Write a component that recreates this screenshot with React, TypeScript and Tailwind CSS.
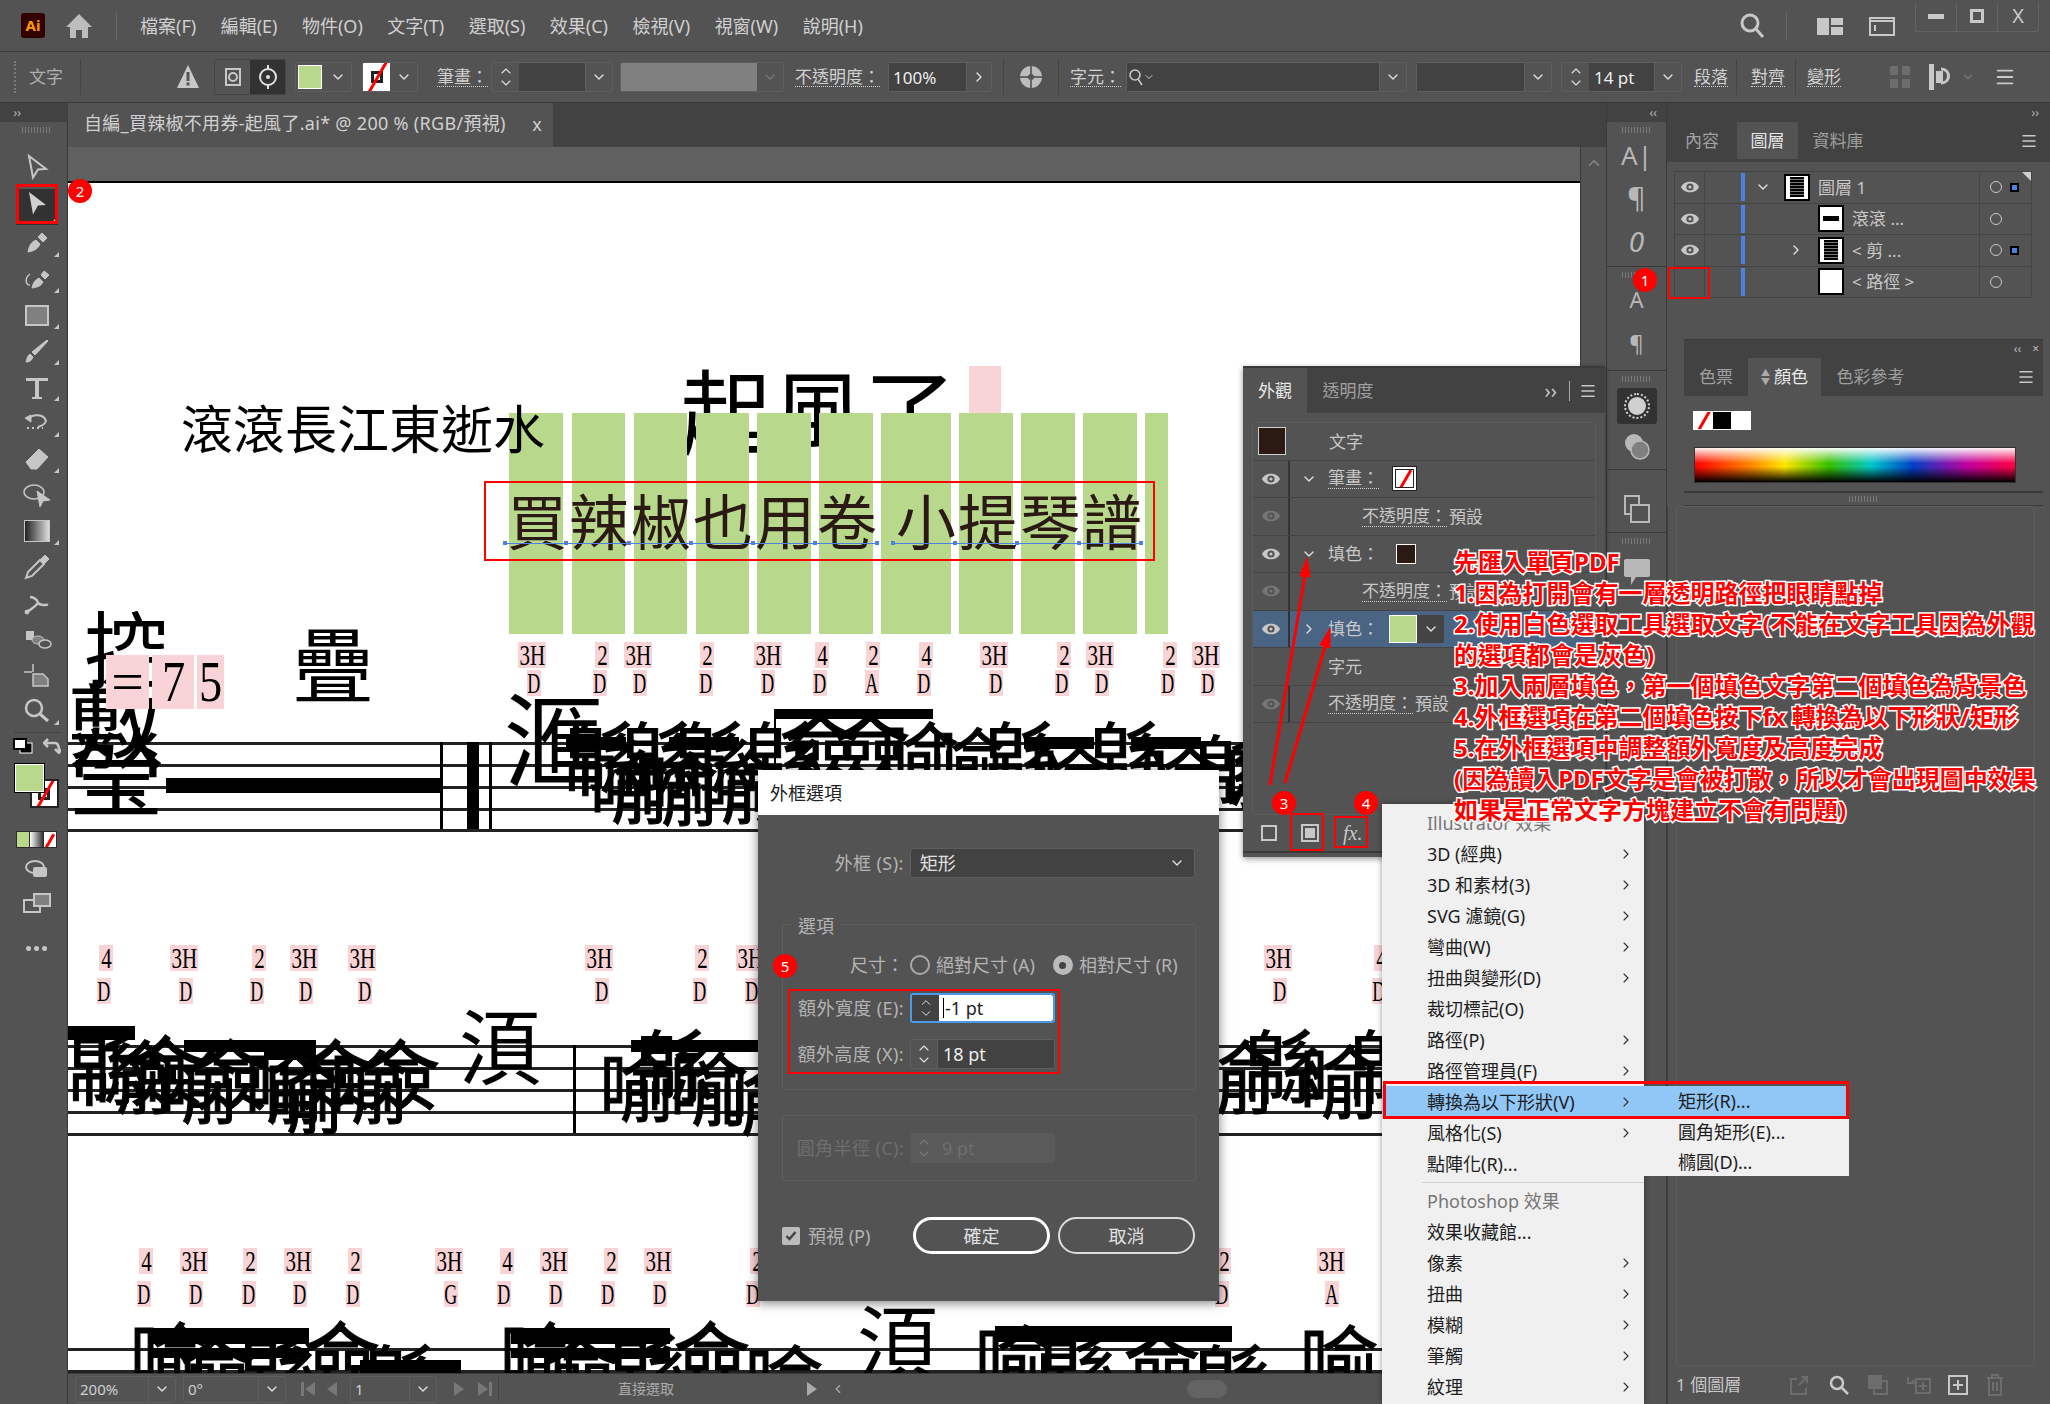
import { ChevronDown, ChevronRight, ChevronUp, Menu as MenuIcon } from 'lucide-react'
import type { ReactNode } from 'react'

const ORIGIN_X = 69
const ORIGIN_Y = 183

// chord labels on the score: [top text, x, bottom text, x]
type Chord = [string, number, string, number]

const chordRows: { top: number; bottom: number; items: Chord[] }[] = [
  {
    top: 642,
    bottom: 670,
    items: [
      ['3H', 519, 'D', 528], ['2', 596, 'D', 594], ['3H', 625, 'D', 634], ['2', 701, 'D', 700],
      ['3H', 755, 'D', 762], ['4', 816, 'D', 814], ['2', 867, 'A', 866], ['4', 920, 'D', 918],
      ['3H', 981, 'D', 990], ['2', 1058, 'D', 1056], ['3H', 1087, 'D', 1096], ['2', 1164, 'D', 1162],
      ['3H', 1193, 'D', 1202],
    ],
  },
  {
    top: 945,
    bottom: 978,
    items: [
      ['4', 100, 'D', 98], ['3H', 171, 'D', 180], ['2', 253, 'D', 251], ['3H', 291, 'D', 300],
      ['3H', 349, 'D', 359], ['3H', 586, 'D', 596], ['2', 696, 'D', 694], ['3H', 737, 'D', 746],
      ['3H', 1265, 'D', 1274], ['4', 1375, 'D', 1373],
    ],
  },
  {
    top: 1248,
    bottom: 1281,
    items: [
      ['4', 140, 'D', 138], ['3H', 181, 'D', 190], ['2', 244, 'D', 243], ['3H', 285, 'D', 294],
      ['2', 349, 'D', 347], ['3H', 436, 'G', 445], ['4', 501, 'D', 498], ['3H', 541, 'D', 550],
      ['2', 605, 'D', 602], ['3H', 645, 'D', 654], ['2', 751, 'D', 747], ['2', 1218, 'D', 1216],
      ['3H', 1318, 'A', 1326],
    ],
  },
]

// overlapping glyphs from the broken PDF import: [x, y, glyph, size]
const garbled: [number, number, string, number][] = [
  [565, 722, '緜', 80], [590, 750, '喻', 80], [622, 722, '緜', 80], [640, 752, '喻', 80], [675, 722, '緜', 80],
  [700, 750, '喻', 80], [745, 722, '緜', 80], [785, 712, '僉', 76], [835, 712, '僉', 76], [880, 722, '喻', 80],
  [930, 728, '喻', 76], [985, 722, '緜', 80], [1030, 745, '喻', 80], [1090, 722, '緜', 80], [1140, 745, '喻', 80],
  [1195, 735, '緜', 80], [1225, 745, '喻', 76],
  [69, 1032, '緜', 80], [95, 1040, '喻', 80], [130, 1036, '僉', 76], [160, 1050, '喻', 80], [195, 1040, '僉', 76],
  [245, 1050, '喻', 80], [265, 1060, '喻', 80], [300, 1040, '僉', 76], [330, 1050, '喻', 80], [365, 1040, '僉', 76],
  [600, 1052, '喻', 76], [636, 1030, '緜', 80], [670, 1052, '喻', 80], [720, 1062, '喻', 80],
  [1195, 1040, '喻', 80], [1245, 1030, '緜', 80], [1300, 1045, '喻', 80], [1350, 1030, '緜', 80],
  [130, 1322, '喻', 80], [180, 1335, '僉', 76], [240, 1335, '緜', 80], [305, 1322, '僉', 76], [365, 1345, '緜', 80],
  [500, 1322, '喻', 80], [545, 1335, '僉', 76], [610, 1335, '緜', 80], [675, 1322, '僉', 76], [745, 1345, '喻', 80],
  [975, 1325, '喻', 80], [1040, 1335, '緜', 80], [1125, 1330, '僉', 76], [1195, 1345, '緜', 80], [1300, 1325, '喻', 80],
]

const bigGlyphs: [number, number, string, number][] = [
  [85, 612, '控', 84], [69, 680, '敷', 96], [69, 728, '瑩', 96], [293, 628, '疊', 82],
  [505, 695, '滙', 100], [460, 1010, '湏', 82], [858, 1306, '湏', 82],
]

const beams: [number, number, number, number][] = [
  [167, 778, 275, 15], [468, 742, 12, 87], [490, 742, 3, 87], [441, 742, 3, 87],
  [567, 737, 60, 13], [670, 737, 70, 13], [775, 709, 159, 10], [775, 709, 2, 100], [1025, 737, 70, 12], [1132, 737, 70, 12],
  [69, 1026, 67, 14], [185, 1040, 132, 12], [265, 1052, 52, 8], [632, 1040, 128, 12], [574, 1045, 3, 88],
  [151, 1328, 159, 16], [151, 1348, 159, 10], [512, 1328, 159, 16], [512, 1348, 159, 10], [361, 1360, 101, 13],
  [996, 1326, 237, 16],
]

const staffLines = [742, 764, 786, 808, 829, 1045, 1067, 1089, 1111, 1133, 1348, 1370]
const greenBars: [number, number][] = [
  [510, 54], [573, 53], [635, 53], [697, 53], [758, 54], [820, 54], [882, 70], [960, 54], [1022, 54], [1084, 54], [1146, 23],
]
const baselineNodes = [506, 567, 630, 692, 754, 816, 878, 894, 956, 1018, 1080, 1142]

const menuRows: [string, boolean, boolean?][] = [
  ['3D (經典)', true], ['3D 和素材(3)', true], ['SVG 濾鏡(G)', true], ['彎曲(W)', true], ['扭曲與變形(D)', true],
  ['裁切標記(O)', false], ['路徑(P)', true], ['路徑管理員(F)', true], ['轉換為以下形狀(V)', true, true],
  ['風格化(S)', true], ['點陣化(R)...', false],
]
const photoshopRows: [string, boolean][] = [
  ['效果收藏館...', false], ['像素', true], ['扭曲', true], ['模糊', true], ['筆觸', true], ['紋理', true],
]

function Tool({ children, corner = true }: { children: ReactNode; corner?: boolean }) {
  return (
    <div className="relative flex h-9 w-full items-center justify-center">
      <svg width="30" height="30" viewBox="0 0 30 30" className="fill-[#c6c6c6] stroke-[#c6c6c6]">
        {children}
      </svg>
      {corner && <span className="absolute bottom-[4px] right-[8px] h-0 w-0 border-b-[5px] border-l-[5px] border-b-[#c6c6c6] border-l-transparent" />}
    </div>
  )
}

function Eye({ dim = false }: { dim?: boolean }) {
  return (
    <svg width="20" height="14" viewBox="0 0 20 14" className={dim ? 'opacity-30' : ''}>
      <path d="M1 7c3-7 15-7 18 0-3 7-15 7-18 0z" fill="#c8c8c8" />
      <circle cx="10" cy="7" r="3.6" fill="#535353" />
      <circle cx="10" cy="7" r="1.6" fill="#c8c8c8" />
    </svg>
  )
}

function Stepper({ className = '' }: { className?: string }) {
  return (
    <div className={`flex w-[27px] shrink-0 flex-col items-center justify-center text-[#e0e0e0] ${className}`}>
      <ChevronUp size={16} strokeWidth={1.6} className="-mb-[2px]" />
      <ChevronDown size={16} strokeWidth={1.6} className="-mt-[2px]" />
    </div>
  )
}

function Chevron({ className = '' }: { className?: string }) {
  return (
    <div className={`flex w-[27px] shrink-0 items-center justify-center border-l border-[#5e5e5e] text-[#e0e0e0] ${className}`}>
      <ChevronDown size={16} strokeWidth={2} />
    </div>
  )
}

function NoneSwatch({ className = '', inner = false }: { className?: string; inner?: boolean }) {
  return (
    <div className={`overflow-hidden bg-white ${className}`}>
      <div className="relative flex h-full w-full items-center justify-center">
        {inner && <span className="h-[12px] w-[12px] border-[3px] border-[#222]" />}
        <span className="absolute left-[-20%] top-1/2 h-[3px] w-[140%] -rotate-[60deg] bg-[#f00]" />
      </div>
    </div>
  )
}

function Badge({ n, x, y }: { n: number; x: string; y: string }) {
  return (
    <div className={`absolute z-40 flex h-[24px] w-[24px] items-center justify-center rounded-full bg-[#f00] text-[15px] leading-none text-white ${x} ${y}`}>
      {n}
    </div>
  )
}

function LayerRow({ thumb, label, chevron, indent, gap, eye, dot }: {
  thumb: ReactNode
  label: string
  chevron?: 'down' | 'right'
  indent: string
  gap?: string
  eye: boolean
  dot: boolean
}) {
  return (
    <div className="flex h-[31.5px] items-center border-b border-[#444] text-[17px] text-[#c8c8c8]">
      <div className="flex h-full w-[30px] items-center justify-center border-r border-[#444]">{eye && <Eye />}</div>
      <div className="h-full w-[36px]" />
      <span className="h-[28px] w-[4px] bg-[#4f7fe0]" />
      <div className={`flex h-full flex-1 items-center ${indent}`}>
        {chevron === 'down' && <ChevronDown size={16} className={`text-[#e0e0e0] ${gap}`} />}
        {chevron === 'right' && <ChevronRight size={16} className={`text-[#e0e0e0] ${gap}`} />}
        <div className="mr-[8px] flex h-[27px] w-[26px] items-center justify-center border-2 border-black bg-white">
          {thumb}
        </div>
        {label}
      </div>
      <div className="flex h-full w-[52px] items-center border-l border-[#444] pl-[10px]">
        <span className="h-[12px] w-[12px] rounded-full border border-[#c8c8c8]" />
        {dot && <span className="ml-[8px] h-[9px] w-[9px] border-2 border-black bg-[#4f7fe0]" />}
      </div>
    </div>
  )
}

function AppearanceRow({ eye, eyeDim, chevron, children, highlight }: {
  eye?: boolean
  eyeDim?: boolean
  chevron?: 'down' | 'right'
  children: ReactNode
  highlight?: boolean
}) {
  return (
    <div className={`flex h-[37.5px] items-center border-b border-[#444] text-[17px] text-[#c8c8c8] ${highlight ? 'bg-[#4a6484]' : ''}`}>
      <div className={`flex h-full w-[37px] items-center justify-center ${eye || eyeDim ? 'border-r-2 border-[#333]' : ''}`}>
        {eye && <Eye />}
        {eyeDim && <Eye dim />}
      </div>
      <div className="flex w-[38px] items-center justify-center text-[#e0e0e0]">
        {chevron === 'down' && <ChevronDown size={16} />}
        {chevron === 'right' && <ChevronRight size={16} />}
      </div>
      {children}
    </div>
  )
}

function DottedLabel({ children, className = '' }: { children: ReactNode; className?: string }) {
  return <span className={`border-b border-dotted border-[#d0d0d0] leading-[1.15] ${className}`}>{children}</span>
}

function ScoreThumb() {
  return <span className="block h-[20px] w-[14px] bg-[repeating-linear-gradient(0deg,#000_0_2px,#777_2px_3px)]" />
}

function Grip({ className = '' }: { className?: string }) {
  return <div className={`h-[6px] w-[30px] bg-[repeating-linear-gradient(90deg,#7a7a7a_0_1px,transparent_1px_3px)] ${className}`} />
}

export default function App() {
  return (
    <div className="relative h-[1404px] w-[2050px] overflow-hidden bg-[#535353] font-['Noto_Sans','Noto_Sans_CJK_TC',sans-serif] text-[18px] text-[#d0d0d0]">
      {/* title bar */}
      <header className="flex h-[52px] items-center border-b border-[#3e3e3e] bg-[#535353]">
        <div className="ml-[21px] flex h-[25px] w-[24px] items-center justify-center rounded-[3px] bg-[#330000] text-[15px] font-bold leading-none text-[#ff9a00]">Ai</div>
        <svg width="28" height="26" viewBox="0 0 28 26" className="ml-[20px] fill-[#bdbdbd]">
          <path d="M14 1L1 14h4v11h6v-8h6v8h6V14h4z" />
        </svg>
        <span className="ml-[23px] mr-[23px] h-[30px] w-px bg-[#666]" />
        <nav className="flex gap-[24.5px] text-[18px] leading-none">
          {['檔案(F)', '編輯(E)', '物件(O)', '文字(T)', '選取(S)', '效果(C)', '檢視(V)', '視窗(W)', '說明(H)'].map(m => (
            <span key={m}>{m}</span>
          ))}
        </nav>
        <div className="ml-auto flex items-center">
          <svg width="28" height="28" viewBox="0 0 28 28" fill="none" stroke="#c8c8c8" strokeWidth="3" className="mr-[20px]">
            <circle cx="12" cy="11" r="8" />
            <path d="M18 17l7 8" />
          </svg>
          <span className="h-[30px] w-px bg-[#666]" />
          <svg width="26" height="20" viewBox="0 0 26 20" className="ml-[30px] fill-[#c8c8c8]">
            <rect x="0" y="2" width="12" height="17" />
            <rect x="14" y="2" width="12" height="7" />
            <rect x="14" y="11" width="12" height="8" />
          </svg>
          <svg width="26" height="20" viewBox="0 0 26 20" fill="none" stroke="#c8c8c8" strokeWidth="2" className="ml-[26px]">
            <rect x="1" y="2" width="24" height="17" />
            <path d="M1 5h24M6 9v6" />
          </svg>
          <div className="ml-[20px] mb-[18px] flex h-[30px] w-[124px] items-center rounded-b-[3px] border border-t-0 border-[#636363] text-[#c8c8c8]">
            <div className="flex h-full flex-1 items-center justify-center border-r border-[#636363]"><span className="h-[5px] w-[16px] bg-[#c8c8c8]" /></div>
            <div className="flex h-full flex-1 items-center justify-center border-r border-[#636363]"><span className="h-[14px] w-[14px] border-[3px] border-[#c8c8c8]" /></div>
            <div className="flex h-full flex-1 items-center justify-center text-[20px] leading-none">X</div>
          </div>
          <span className="w-[11px]" />
        </div>
      </header>

      {/* control bar */}
      <div className="flex h-[51px] items-center border-b border-[#3a3a3a] bg-[#535353] text-[17px]">
        <span className="ml-[14px] h-[32px] w-[2px] border-l-2 border-dotted border-[#7a7a7a]" />
        <span className="ml-[13px] w-[51px] text-[#b0b0b0]">文字</span>
        <span className="h-[36px] w-px bg-[#444]" />
        <svg width="24" height="26" viewBox="0 0 24 26" className="ml-[95px] fill-[#c8c8c8]">
          <path d="M12 1L1 24h22z" />
          <rect x="10.5" y="8" width="3" height="9" fill="#535353" />
          <rect x="10.5" y="18.5" width="3" height="3" fill="#535353" />
        </svg>
        <div className="ml-[14px] flex h-[36px] w-[72px] rounded-[3px] border border-[#444]">
          <div className="flex flex-1 items-center justify-center">
            <svg width="20" height="22" viewBox="0 0 20 22" fill="none" stroke="#c8c8c8" strokeWidth="2"><rect x="3" y="3" width="14" height="16" /><circle cx="10" cy="11" r="4" /></svg>
          </div>
          <div className="flex flex-1 items-center justify-center bg-[#323232]">
            <svg width="22" height="24" viewBox="0 0 22 24" fill="none" stroke="#e0e0e0" strokeWidth="2"><circle cx="11" cy="12" r="8" /><path d="M11 0v4M11 20v4" /><circle cx="11" cy="12" r="1" /></svg>
          </div>
        </div>
        <div className="ml-[9px] flex h-[30px] w-[57px] rounded-[3px] border border-[#5e5e5e]">
          <span className="m-[2px] w-[27px] border border-white bg-[#b8d88c]" />
          <Chevron className="border-none" />
        </div>
        <div className="ml-[10px] flex h-[30px] w-[56px] rounded-[3px] border border-[#5e5e5e]">
          <NoneSwatch inner className="w-[28px]" />
          <Chevron className="border-none" />
        </div>
        <DottedLabel className="ml-[19px]">筆畫：</DottedLabel>
        <div className="ml-[3px] flex h-[30px] w-[122px] rounded-[3px] border border-[#5e5e5e]">
          <Stepper />
          <span className="flex-1 bg-[#424242]" />
          <Chevron />
        </div>
        <div className="ml-[7px] flex h-[30px] w-[164px] rounded-[3px] border border-[#5e5e5e]">
          <span className="w-[136px] bg-[#808080]" />
          <div className="flex flex-1 items-center justify-center text-[#7a7a7a]"><ChevronDown size={16} /></div>
        </div>
        <DottedLabel className="ml-[11px]">不透明度：</DottedLabel>
        <div className="ml-[8px] flex h-[30px] w-[104px] rounded-[3px] border border-[#5e5e5e]">
          <span className="flex w-[77px] items-center bg-[#424242] pl-[4px] leading-none text-[#eee]">100%</span>
          <div className="flex flex-1 items-center justify-center border-l border-[#5e5e5e] text-[#e0e0e0]"><ChevronRight size={16} /></div>
        </div>
        <span className="ml-[11px] h-[36px] w-px bg-[#444]" />
        <svg width="24" height="24" viewBox="0 0 24 24" className="ml-[15px]">
          <circle cx="12" cy="12" r="11" fill="#bdbdbd" />
          <circle cx="12" cy="12" r="3" fill="#535353" />
          <path d="M12 1v8M1 12h8M15 12h8M12 15v8" stroke="#666" strokeWidth="2" />
        </svg>
        <span className="ml-[15px] h-[36px] w-px bg-[#444]" />
        <DottedLabel className="ml-[11px]">字元：</DottedLabel>
        <div className="ml-[5px] flex h-[30px] w-[281px] rounded-[3px] border border-[#5e5e5e]">
          <div className="flex flex-1 items-center bg-[#424242] pl-[2px]">
            <svg width="14" height="18" viewBox="0 0 14 18" fill="none" stroke="#c8c8c8" strokeWidth="1.6"><circle cx="6" cy="7" r="5" /><path d="M9 11l4 6" /></svg>
            <ChevronDown size={12} className="text-[#c8c8c8]" />
          </div>
          <Chevron />
        </div>
        <div className="ml-[9px] flex h-[30px] w-[136px] rounded-[3px] border border-[#5e5e5e]">
          <span className="flex-1 bg-[#424242]" />
          <Chevron />
        </div>
        <div className="ml-[9px] flex h-[30px] w-[121px] rounded-[3px] border border-[#5e5e5e]">
          <Stepper />
          <span className="flex flex-1 items-center bg-[#424242] pl-[5px] leading-none text-[#eee]">14 pt</span>
          <Chevron />
        </div>
        <DottedLabel className="ml-[12px]">段落</DottedLabel>
        <span className="ml-[8px] h-[36px] w-px bg-[#444]" />
        <DottedLabel className="ml-[14px]">對齊</DottedLabel>
        <span className="ml-[10px] h-[36px] w-px bg-[#444]" />
        <DottedLabel className="ml-[11px]">變形</DottedLabel>
        <svg width="20" height="24" viewBox="0 0 20 24" className="ml-[49px] fill-[#6d6d6d]">
          <rect x="0" y="1" width="8" height="9" /><rect x="12" y="1" width="8" height="9" /><rect x="0" y="14" width="8" height="9" /><rect x="12" y="14" width="8" height="9" />
        </svg>
        <svg width="24" height="26" viewBox="0 0 24 26" className="ml-[19px]">
          <rect x="0" y="0" width="5" height="26" fill="#c8c8c8" />
          <rect x="7" y="7" width="7" height="12" fill="#c8c8c8" />
          <path d="M12 5c10 0 10 14 0 14" fill="none" stroke="#c8c8c8" strokeWidth="3" />
        </svg>
        <ChevronDown size={14} className="ml-[8px] text-[#777]" />
        <MenuIcon size={22} className="ml-[19px] text-[#c8c8c8]" />
      </div>

      {/* working area */}
      <main className="flex h-[1301px]">
        {/* tools */}
        <aside className="flex w-[68px] shrink-0 flex-col items-center border-r border-[#3a3a3a] bg-[#535353] pl-[6px]">
          <div className="-ml-[6px] flex h-[19px] w-[68px] items-center bg-[#424242] pl-[14px] text-[12px] leading-none text-[#bbb]">››</div>
          <Grip className="mt-[5px]" />
          <div className="mt-[17px] w-full">
            <Tool corner={false}><path d="M7 3l17 13-8 .5 -5 8z" fill="none" strokeWidth="2" /></Tool>
            <div className="relative mx-auto h-9 w-[42px] bg-[#323232]">
              <svg width="30" height="30" viewBox="0 0 30 30" className="mx-auto mt-[3px] fill-[#d0d0d0]"><path d="M7 3l17 13-8 .5-5 9z" /></svg>
              <span className="absolute bottom-[2px] right-[2px] h-0 w-0 border-b-[5px] border-l-[5px] border-b-[#c6c6c6] border-l-transparent" />
            </div>
            <Tool><path d="M6 24c1-6 3-10 8-12l4 4c-2 5-6 7-12 8z" /><path d="M16 9l4-4 5 5-4 4z" /></Tool>
            <Tool><path d="M10 24c1-5 3-8 7-10l4 4c-2 4-5 5-11 6z" /><path d="M19 11l3-4 5 4-4 4z" /><path d="M8 10c-6 4-4 12 0 11" fill="none" strokeWidth="1.5" /></Tool>
            <Tool><rect x="4" y="6" width="22" height="19" fill="#808080" strokeWidth="2" /></Tool>
            <Tool><path d="M4 26c4 0 6-2 7-5l-3-3c-2 1-3 4-4 8z" /><path d="M10 16L25 4l1 1-13 14z" /></Tool>
            <Tool><path d="M4 6h22v3h-9v16h3v2H10v-2h3V9H4z" strokeWidth="0" /></Tool>
            <Tool><path d="M6 12c4-7 16-6 18 1-2 5-6 5-8 6" fill="none" strokeWidth="2" /><path d="M3 10l6-3v7z" /><path d="M5 20h16" strokeDasharray="2 3" fill="none" strokeWidth="2" /></Tool>
            <Tool><path d="M4 18L17 5l9 8-11 12H9z" /></Tool>
            <Tool corner={false}><ellipse cx="12" cy="12" rx="10" ry="7" fill="none" strokeWidth="1.5" /><path d="M15 11l13 9-7 1-3 6z" /></Tool>
            <div className="relative flex h-9 items-center justify-center">
              <span className="h-[22px] w-[26px] border border-[#c6c6c6] bg-[linear-gradient(90deg,#222,#ddd)]" />
              <span className="absolute bottom-[4px] right-[8px] h-0 w-0 border-b-[5px] border-l-[5px] border-b-[#c6c6c6] border-l-transparent" />
            </div>
            <Tool corner={false}><path d="M4 26l2-6L18 8l4 4-12 12z" fill="none" strokeWidth="2" /><path d="M18 8l5-5 4 4-5 5z" /></Tool>
            <Tool corner={false}><path d="M5 24c4-3 8-5 11-9 4 4 8 1 10 2M8 9c4 0 8 3 8 6" fill="none" strokeWidth="2.5" /><circle cx="5" cy="24" r="2" /></Tool>
            <Tool corner={false}><rect x="4" y="7" width="8" height="9" strokeWidth="0" /><ellipse cx="16" cy="16" rx="6" ry="4" fill="#808080" /><ellipse cx="23" cy="20" rx="6" ry="4" fill="#535353" strokeWidth="1.5" /></Tool>
            <Tool corner={false}><path d="M2 12h8M11 4v8" fill="none" strokeWidth="1.5" /><path d="M11 14h10l5 5v7H11z" fill="#808080" strokeWidth="1.5" /></Tool>
            <Tool><circle cx="12" cy="12" r="8" fill="none" strokeWidth="2.5" /><path d="M18 18l8 7" strokeWidth="3" /></Tool>
          </div>
          <div className="mt-[3px] h-px w-[46px] bg-[#444]" />
          <div className="mt-[3px] flex h-[20px] w-[48px] items-center justify-between">
            <svg width="20" height="16" viewBox="0 0 20 16"><rect x="7" y="5" width="12" height="10" fill="#000" stroke="#fff" /><rect x="1" y="1" width="12" height="10" fill="#fff" stroke="#000" strokeWidth="2" /></svg>
            <svg width="18" height="16" viewBox="0 0 18 16" fill="none" stroke="#c6c6c6" strokeWidth="2.5"><path d="M2 5h10c3 0 4 3 4 8M5 1L1 5l4 4M12 11l4 4 2-4" /></svg>
          </div>
          <div className="relative mt-[8px] h-[44px] w-[44px]">
            <div className="absolute bottom-0 right-0 h-[29px] w-[29px] border-2 border-[#222]">
              <NoneSwatch inner className="h-full w-full" />
            </div>
            <span className="absolute left-0 top-0 h-[28px] w-[29px] border border-white bg-[#b8d88c] outline outline-black" />
          </div>
          <div className="mt-[23px] flex h-[17px] w-[41px] gap-px bg-[#2c2c2c] p-px">
            <span className="flex-1 bg-[#b8d88c]" />
            <span className="flex-1 bg-[linear-gradient(90deg,#fff,#333)]" />
            <NoneSwatch className="flex-1" />
          </div>
          <svg width="24" height="18" viewBox="0 0 24 18" className="mt-[12px] fill-[#c6c6c6]">
            <ellipse cx="10" cy="7" rx="9" ry="6" fill="none" stroke="#c6c6c6" strokeWidth="2" /><rect x="8" y="7" width="14" height="10" rx="2" />
          </svg>
          <svg width="28" height="20" viewBox="0 0 28 20" fill="none" stroke="#c6c6c6" strokeWidth="2" className="mt-[15px]">
            <rect x="1" y="7" width="16" height="12" /><rect x="11" y="1" width="16" height="12" fill="#808080" />
          </svg>
          <div className="mt-[33px] flex gap-[3px]">
            <span className="h-[5px] w-[5px] rounded-full bg-[#c6c6c6]" />
            <span className="h-[5px] w-[5px] rounded-full bg-[#c6c6c6]" />
            <span className="h-[5px] w-[5px] rounded-full bg-[#c6c6c6]" />
          </div>
        </aside>

        {/* document */}
        <section className="flex w-[1538px] shrink-0 flex-col">
          <div className="flex h-[44px] shrink-0 bg-[#424242]">
            <div className="flex w-[485px] items-center bg-[#535353] pb-[3px] pl-[16px] text-[18px] tracking-[0.3px] text-[#d0d0d0]">
              <span className="whitespace-nowrap">自編_買辣椒不用券-起風了.ai* @ 200 % (RGB/預視)</span>
              <span className="ml-auto mr-[11px] text-[18px] leading-none">x</span>
            </div>
          </div>
          <div className="flex min-h-0 flex-1">
            <div className="flex min-w-0 flex-1 flex-col">
              <div className="h-[36px] shrink-0 border-b-2 border-black bg-[#606060]" />
              <div className="relative flex-1 overflow-hidden bg-white font-['Liberation_Serif','Noto_Sans_CJK_TC',serif] text-black">
                <span className="absolute whitespace-nowrap text-[92px] leading-none" style={{ left: 681 - ORIGIN_X, top: 370 - ORIGIN_Y }}>起風了</span>
                <span className="absolute h-[47px] w-[32px] bg-[#f9d4d6]" style={{ left: 970 - ORIGIN_X, top: 366 - ORIGIN_Y }} />
                {greenBars.map(([x, w]) => (
                  <span key={x} className="absolute h-[221px] bg-[#b8d88c]" style={{ left: x - ORIGIN_X, top: 413 - ORIGIN_Y, width: w }} />
                ))}
                <span className="absolute whitespace-nowrap text-[52px] leading-none" style={{ left: 182 - ORIGIN_X, top: 406 - ORIGIN_Y }}>滾滾長江東逝水</span>
                <span className="absolute whitespace-nowrap text-[60px] leading-none tracking-[2px] text-[#2b1a14]" style={{ left: 508 - ORIGIN_X, top: 495 - ORIGIN_Y }}>買辣椒也用卷 小提琴譜</span>
                <span className="absolute h-px w-[372px] bg-[#4f7fe0]" style={{ left: 506 - ORIGIN_X, top: 543 - ORIGIN_Y }} />
                <span className="absolute h-px w-[248px] bg-[#4f7fe0]" style={{ left: 894 - ORIGIN_X, top: 543 - ORIGIN_Y }} />
                {baselineNodes.map(x => (
                  <span key={x} className="absolute h-[4px] w-[4px] bg-[#4f7fe0]" style={{ left: x - ORIGIN_X - 2, top: 541 - ORIGIN_Y }} />
                ))}
                {staffLines.map(y => (
                  <span key={y} className="absolute left-0 right-0 h-[3px] bg-[#222]" style={{ top: y - ORIGIN_Y }} />
                ))}
                {bigGlyphs.map(([x, y, glyph, size], i) => (
                  <span key={i} className="absolute leading-none" style={{ left: x - ORIGIN_X, top: y - ORIGIN_Y, fontSize: size }}>{glyph}</span>
                ))}
                {garbled.map(([x, y, glyph, size], i) => (
                  <span key={i} className="absolute leading-none [-webkit-text-stroke:1px_#000]" style={{ left: x - ORIGIN_X, top: y - ORIGIN_Y, fontSize: size }}>{glyph}</span>
                ))}
                {beams.map(([x, y, w, h], i) => (
                  <span key={i} className="absolute bg-black" style={{ left: x - ORIGIN_X, top: y - ORIGIN_Y, width: w, height: h }} />
                ))}
                <div className="absolute flex h-[54px] gap-[3px] text-[58px] leading-[54px]" style={{ left: 107 - ORIGIN_X, top: 655 - ORIGIN_Y }}>
                  <span className="flex w-[43px] items-center justify-center bg-[#f9d4d6]">=</span>
                  <span className="flex w-[42px] items-center justify-center bg-[#f9d4d6]"><span className="scale-x-[0.8]">7</span></span>
                  <span className="flex w-[27px] items-center justify-center bg-[#f9d4d6]"><span className="scale-x-[0.8]">5</span></span>
                </div>
                {chordRows.map(row =>
                  row.items.map(([t, tx, b, bx]) => (
                    <div key={`${row.top}-${tx}`}>
                      <span className="absolute flex h-[26px] items-center justify-center overflow-hidden bg-[#f9d4d6] text-[30px] leading-none" style={{ left: tx - ORIGIN_X, top: row.top - ORIGIN_Y, width: t.length > 1 ? 28 : 14 }}>
                        <span className="scale-x-[0.7]">{t}</span>
                      </span>
                      <span className="absolute flex h-[26px] w-[14px] items-center justify-center overflow-hidden bg-[#f9d4d6] text-[30px] leading-none" style={{ left: bx - ORIGIN_X, top: row.bottom - ORIGIN_Y }}>
                        <span className="scale-x-[0.6]">{b}</span>
                      </span>
                    </div>
                  )),
                )}
                <span className="absolute border-[2px] border-[#f00]" style={{ left: 485 - ORIGIN_X, top: 481 - ORIGIN_Y, width: 671, height: 80 }} />
              </div>
            </div>
            <div className="flex w-[26px] shrink-0 justify-center border-l border-[#3a3a3a] bg-[#535353] pt-[7px] text-[#888]">
              <ChevronUp size={18} />
            </div>
          </div>
          {/* status */}
          <div className="flex h-[31px] shrink-0 items-center border-t border-[#3a3a3a] bg-[#535353] pl-[7px] text-[15px] leading-none">
            <div className="flex h-[27px] w-[101px] rounded-[3px] border border-[#5e5e5e]">
              <span className="flex flex-1 items-center pl-[4px]">200%</span>
              <Chevron />
            </div>
            <div className="ml-[7px] flex h-[27px] w-[103px] rounded-[3px] border border-[#5e5e5e]">
              <span className="flex flex-1 items-center pl-[4px]">0°</span>
              <Chevron />
            </div>
            <svg width="42" height="16" viewBox="0 0 42 16" className="ml-[13px] fill-[#777]">
              <rect x="2" y="1" width="3" height="14" /><path d="M16 1L6 8l10 7zM38 1L28 8l10 7z" />
            </svg>
            <div className="ml-[9px] flex h-[27px] w-[87px] rounded-[3px] border border-[#5e5e5e]">
              <span className="flex flex-1 items-center pl-[4px]">1</span>
              <Chevron />
            </div>
            <svg width="48" height="16" viewBox="0 0 48 16" className="ml-[13px] fill-[#777]">
              <path d="M4 1l10 7-10 7zM28 1l10 7-10 7z" /><rect x="39" y="1" width="3" height="14" />
            </svg>
            <span className="h-[26px] w-px bg-[#444]" />
            <span className="ml-[119px] text-[14px] text-[#aaa]">直接選取</span>
            <svg width="10" height="14" viewBox="0 0 10 14" className="ml-[133px] fill-[#aaa]"><path d="M0 0l10 7-10 7z" /></svg>
            <ChevronRight size={14} className="ml-[14px] rotate-180 text-[#aaa]" />
            <span className="ml-[342px] h-[18px] w-[40px] rounded-full bg-[#636363]" />
          </div>
        </section>

        {/* icon dock */}
        <aside className="flex w-[61px] shrink-0 flex-col items-center border-x border-[#3a3a3a] bg-[#535353] text-[#b8b8b8]">
          <div className="flex h-[19px] w-full items-center justify-end bg-[#424242] pr-[9px] text-[12px] leading-none">‹‹</div>
          <Grip className="mt-[5px]" />
          <div className="mt-[2px] text-[26px] leading-[40px]">A|</div>
          <div className="text-[28px] leading-[44px]">¶</div>
          <div className="text-[28px] italic leading-[44px]">0</div>
          <div className="mt-[3px] h-px w-full bg-[#3a3a3a]" />
          <Grip className="mt-[5px]" />
          <div className="mt-0 text-[22px] leading-[42px]">A</div>
          <div className="text-[22px] leading-[44px]">¶</div>
          <div className="mt-[6px] h-px w-full bg-[#3a3a3a]" />
          <Grip className="mt-[5px]" />
          <div className="mt-[6px] flex h-[36px] w-[40px] items-center justify-center rounded-[3px] bg-[#323232]">
            <span className="h-[18px] w-[18px] rounded-full bg-[#d0d0d0] outline-2 outline-offset-2 outline-dotted outline-[#d0d0d0]" />
          </div>
          <svg width="26" height="28" viewBox="0 0 26 28" className="mt-[8px]">
            <circle cx="10" cy="11" r="9" fill="#b8b8b8" />
            <circle cx="16" cy="18" r="9" fill="#808080" stroke="#b8b8b8" strokeWidth="1.5" />
          </svg>
          <div className="mt-[9px] h-px w-full bg-[#3a3a3a]" />
          <svg width="26" height="28" viewBox="0 0 26 28" fill="none" stroke="#b8b8b8" strokeWidth="2" className="mt-[25px]">
            <rect x="1" y="1" width="14" height="18" />
            <rect x="7" y="10" width="18" height="17" fill="#535353" />
          </svg>
          <div className="mt-[9px] h-px w-full bg-[#3a3a3a]" />
          <Grip className="mt-[5px]" />
          <svg width="26" height="26" viewBox="0 0 26 26" className="mt-[15px] fill-[#b8b8b8]">
            <path d="M2 0h22a2 2 0 012 2v14a2 2 0 01-2 2H12l-5 8v-8H2a2 2 0 01-2-2V2a2 2 0 012-2z" />
          </svg>
        </aside>

        {/* right panels */}
        <aside className="flex min-w-0 flex-1 flex-col bg-[#535353]">
          <div className="flex h-[19px] shrink-0 items-center justify-end bg-[#424242] pr-[11px] text-[12px] leading-none text-[#bbb]">››</div>
          <div className="flex h-[40px] shrink-0 bg-[#424242] pb-[3px] text-[17px] text-[#a0a0a0]">
            <span className="flex w-[70px] items-center justify-center">內容</span>
            <span className="flex w-[61px] items-center justify-center bg-[#535353] text-[#e8e8e8]">圖層</span>
            <span className="flex w-[80px] items-center justify-center">資料庫</span>
            <MenuIcon size={18} className="ml-auto mr-[12px] self-center text-[#c8c8c8]" />
          </div>
          <div className="relative ml-[7px] mr-[18px] mt-[9px] h-[127px] shrink-0 border border-[#444]">
            <LayerRow eye dot chevron="down" indent="pl-[10px]" gap="mr-[13px]" label="圖層 1" thumb={<ScoreThumb />} />
            <LayerRow eye dot={false} indent="pl-[73px]" label="滾滾 ..." thumb={<span className="block h-[5px] w-[16px] bg-black" />} />
            <LayerRow eye dot chevron="right" indent="pl-[43px]" gap="mr-[14px]" label="< 剪 ..." thumb={<ScoreThumb />} />
            <LayerRow eye={false} dot={false} indent="pl-[73px]" label="< 路徑 >" thumb={null} />
            <span className="absolute right-0 top-0 h-0 w-0 border-t-[9px] border-l-[9px] border-t-[#d0d0d0] border-l-transparent" />
          </div>
          <div className="ml-[17px] mr-[7px] mt-[41px] flex h-[19px] shrink-0 items-center justify-end gap-[11px] border-t border-[#3a3a3a] bg-[#424242] pr-[4px] text-[12px] leading-none text-[#bbb]">
            <span>‹‹</span>
            <span>×</span>
          </div>
          <div className="ml-[17px] mr-[7px] h-[135px] shrink-0 border-b-2 border-[#3a3a3a]">
            <div className="flex h-[38px] bg-[#424242] text-[17px] text-[#a0a0a0]">
              <span className="flex w-[64px] items-center justify-center">色票</span>
              <span className="flex w-[73px] items-center justify-center gap-[4px] bg-[#535353] text-[#e8e8e8]"><span className="text-[9px] leading-[9px] text-[#aaa]">▲<br />▼</span>顏色</span>
              <span className="flex w-[99px] items-center justify-center">色彩參考</span>
              <MenuIcon size={18} className="ml-auto mr-[8px] self-center text-[#c8c8c8]" />
            </div>
            <div className="ml-[9px] mt-[15px] flex h-[19px] w-[58px] border border-white">
              <NoneSwatch className="flex-1" />
              <span className="flex-1 bg-black" />
              <span className="flex-1 bg-white" />
            </div>
            <div className="relative ml-[10px] mt-[17px] h-[36px] w-[322px] border border-[#333] bg-[linear-gradient(90deg,#f00,#ff8a00_18%,#ffe600_28%,#34c000_42%,#00c8c8_55%,#0040c8_68%,#c000a0_85%,#ff0040)]">
              <span className="absolute inset-0 bg-[linear-gradient(180deg,rgba(255,255,255,0.95),transparent_45%,transparent_55%,#000)]" />
            </div>
          </div>
          <div className="ml-[17px] mr-[7px] flex h-[13px] shrink-0 items-center justify-center border-b border-[#3a3a3a]">
            <Grip />
          </div>
          <div className="mr-[7px] flex min-h-0 flex-1 flex-col border-l border-[#3f3f3f]">
            <div className="mx-[8px] flex-1 rounded-[3px] border border-[#5c5c5c]" />
            <div className="flex h-[38px] shrink-0 items-center pl-[8px] text-[17px] text-[#c8c8c8]">
              <span className="w-[113px]">1 個圖層</span>
              <svg width="20" height="20" viewBox="0 0 20 20" fill="none" stroke="#6d6d6d" strokeWidth="2"><path d="M8 4H2v15h15v-6M10 10l8-8M12 2h6v6" /></svg>
              <svg width="20" height="20" viewBox="0 0 20 20" fill="none" stroke="#c8c8c8" strokeWidth="2.5" className="ml-[20px]"><circle cx="8" cy="8" r="6" /><path d="M12 12l7 7" /></svg>
              <svg width="20" height="20" viewBox="0 0 20 20" fill="none" stroke="#6d6d6d" strokeWidth="2" className="ml-[19px]"><rect x="1" y="1" width="12" height="12" fill="#6d6d6d" /><rect x="6" y="6" width="13" height="13" /></svg>
              <svg width="24" height="20" viewBox="0 0 24 20" fill="none" stroke="#6d6d6d" strokeWidth="2" className="ml-[19px]"><path d="M1 2v6h6M5 5l3 3" /><rect x="9" y="4" width="14" height="14" /><path d="M16 7v8M12 11h8" /></svg>
              <svg width="20" height="20" viewBox="0 0 20 20" fill="none" stroke="#c8c8c8" strokeWidth="2" className="ml-[17px]"><rect x="1" y="1" width="18" height="18" /><path d="M10 5v10M5 10h10" /></svg>
              <svg width="20" height="22" viewBox="0 0 20 22" fill="none" stroke="#6d6d6d" strokeWidth="2" className="ml-[17px]"><path d="M2 4h16M7 4V1h6v3M4 4v17h12V4M8 8v9M12 8v9" /></svg>
            </div>
          </div>
        </aside>
      </main>

      {/* layers panel marker */}
      <span className="absolute left-[1668px] top-[267px] z-30 h-[32px] w-[42px] border-2 border-[#f00]" />

      {/* appearance panel */}
      <div className="absolute left-[1243px] top-[366px] z-10 flex h-[491px] w-[362px] flex-col border-t-2 border-[#3a3a3a] bg-[#535353] shadow-[0_2px_6px_rgba(0,0,0,0.4)]">
        <div className="flex h-[45px] shrink-0 items-center bg-[#424242] text-[17px] text-[#a0a0a0]">
          <span className="flex h-full w-[64px] items-center justify-center bg-[#535353] text-[#e8e8e8]">外觀</span>
          <span className="flex h-full w-[82px] items-center justify-center">透明度</span>
          <span className="ml-auto text-[20px] leading-none text-[#c8c8c8]">››</span>
          <span className="ml-[12px] h-[20px] w-px bg-[#aaa]" />
          <MenuIcon size={18} className="ml-[9px] mr-[8px] text-[#c8c8c8]" />
        </div>
        <div className="mx-[9px] mt-[9px] h-[393px] shrink-0 rounded-[3px] border border-[#5c5c5c]">
          <div className="flex h-[37.5px] items-center border-b border-[#444] pl-[5px] text-[17px] text-[#c8c8c8]">
            <span className="h-[28px] w-[28px] border border-[#d0d0d0] bg-[#2b1a14]" />
            <span className="ml-[43px]">文字</span>
          </div>
          <AppearanceRow eye chevron="down">
            <DottedLabel>筆畫：</DottedLabel>
            <div className="ml-[13px] flex h-[25px] w-[25px] items-center justify-center border border-[#222] bg-white p-[2px]"><NoneSwatch className="h-full w-full border border-[#222]" /></div>
          </AppearanceRow>
          <AppearanceRow eyeDim>
            <DottedLabel className="ml-[34px]">不透明度：</DottedLabel>
            <span className="ml-[2px]">預設</span>
          </AppearanceRow>
          <AppearanceRow eye chevron="down">
            <span>填色：</span>
            <span className="ml-[17px] h-[20px] w-[20px] border border-white bg-[#2b1a14]" />
          </AppearanceRow>
          <AppearanceRow eyeDim>
            <DottedLabel className="ml-[34px]">不透明度：</DottedLabel>
            <span className="ml-[2px]">預設</span>
          </AppearanceRow>
          <AppearanceRow eye chevron="right" highlight>
            <span>填色：</span>
            <div className="ml-[10px] flex h-[28px] w-[55px] rounded-[2px] bg-[#444]">
              <span className="w-[28px] border border-white bg-[#b8d88c]" />
              <Chevron className="border-none" />
            </div>
          </AppearanceRow>
          <div className="flex h-[37.5px] items-center border-b border-[#444] pl-[75px] text-[17px] text-[#c8c8c8]">字元</div>
          <AppearanceRow eyeDim>
            <DottedLabel>不透明度：</DottedLabel>
            <span className="ml-[2px]">預設</span>
          </AppearanceRow>
        </div>
        <div className="flex h-[38px] shrink-0 items-center border-b-2 border-[#3a3a3a] pl-[18px]">
          <span className="h-[16px] w-[16px] border-2 border-[#c8c8c8]" />
          <span className="ml-[24px] flex h-[18px] w-[18px] items-center justify-center border-2 border-[#c8c8c8]"><span className="h-[10px] w-[10px] bg-[#c8c8c8]" /></span>
          <span className="ml-[24px] font-['Liberation_Serif',serif] text-[20px] italic leading-none text-[#c8c8c8]">fx.</span>
        </div>
      </div>
      <span className="absolute left-[1290px] top-[813px] z-30 h-[38px] w-[34px] border-2 border-[#f00]" />
      <span className="absolute left-[1334px] top-[816px] z-30 h-[32px] w-[34px] border-2 border-[#f00]" />

      {/* effect menu */}
      <div className="absolute left-[1382px] top-[804px] z-20 h-[600px] w-[262px] bg-[#f0f0f0] pt-[3px] text-[18px] leading-none text-[#1e1e1e] shadow-[0_0_6px_rgba(0,0,0,0.4)]">
        <div className="flex h-[31px] items-center pl-[45px] text-[#777]">Illustrator 效果</div>
        {menuRows.map(([label, sub, active]) => (
          <div key={label} className={`flex h-[31px] items-center pl-[45px] pr-[10px] ${active ? 'bg-[#90c7f7]' : ''}`}>
            {label}
            {sub && <ChevronRight size={16} strokeWidth={1.7} className="ml-auto text-[#333]" />}
          </div>
        ))}
        <div className="flex h-[6px] items-center pl-[40px]"><span className="h-px flex-1 bg-[#d0d0d0]" /></div>
        <div className="flex h-[31px] items-center pl-[45px] text-[#777]">Photoshop 效果</div>
        {photoshopRows.map(([label, sub]) => (
          <div key={label} className="flex h-[31px] items-center pl-[45px] pr-[10px]">
            {label}
            {sub && <ChevronRight size={16} strokeWidth={1.7} className="ml-auto text-[#333]" />}
          </div>
        ))}
      </div>
      <div className="absolute left-[1644px] top-[1086px] z-20 h-[90px] w-[205px] bg-[#f0f0f0] text-[18px] leading-none text-[#1e1e1e]">
        <div className="flex h-[30px] items-center bg-[#90c7f7] pl-[34px]">矩形(R)...</div>
        <div className="flex h-[31px] items-center pl-[34px]">圓角矩形(E)...</div>
        <div className="flex h-[29px] items-center pl-[34px]">橢圓(D)...</div>
      </div>
      <span className="absolute left-[1383px] top-[1081px] z-30 h-[38px] w-[466px] border-[3px] border-[#f00]" />

      {/* stroke options dialog */}
      <div className="absolute left-[758px] top-[770px] z-20 flex h-[531px] w-[461px] flex-col bg-[#535353] text-[18px] leading-none text-[#b4b4b4] shadow-[0_2px_10px_rgba(0,0,0,0.5)]">
        <div className="flex h-[45px] shrink-0 items-center bg-white pl-[12px] text-[#222]">外框選項</div>
        <div className="flex flex-col px-[24px]">
          <div className="mt-[33px] flex items-center">
            <span className="w-[128px] pr-[6px] text-right tracking-[0.4px]">外框 (S):</span>
            <div className="flex h-[30px] w-[286px] items-center justify-between rounded-[3px] border border-[#5e5e5e] bg-[#424242] pl-[9px] pr-[9px] text-[#e0e0e0]">
              矩形
              <ChevronDown size={16} strokeWidth={2} />
            </div>
          </div>
          <div className="relative mt-[46px] h-[166px] w-[414px] rounded-[3px] border border-[#5e5e5e]">
            <span className="absolute left-[9px] top-[-8px] bg-[#535353] px-[6px]">選項</span>
            <div className="mt-[30px] flex items-center">
              <span className="w-[127px] pr-[6px] text-right">尺寸：</span>
              <span className="h-[20px] w-[20px] rounded-full border-2 border-[#aaa]" />
              <span className="ml-[6px]">絕對尺寸 (A)</span>
              <span className="ml-[18px] flex h-[20px] w-[20px] items-center justify-center rounded-full bg-[#bbb]"><span className="h-[7px] w-[7px] rounded-full bg-[#424242]" /></span>
              <span className="ml-[6px]">相對尺寸 (R)</span>
            </div>
            <div className="mt-[18px] flex items-center">
              <span className="w-[127px] pr-[6px] text-right tracking-[0.4px]">額外寬度 (E):</span>
              <div className="flex h-[30px] w-[145px] rounded-[3px] border-2 border-[#4a9ae8] bg-[#424242]">
                <Stepper />
                <span className="flex flex-1 items-center rounded-r-[2px] bg-white pl-[4px] text-[#222]"><span className="mr-px h-[20px] w-px bg-black" />-1 pt</span>
              </div>
            </div>
            <div className="mt-[16px] flex items-center">
              <span className="w-[127px] pr-[6px] text-right tracking-[0.4px]">額外高度 (X):</span>
              <div className="flex h-[30px] w-[145px] rounded-[3px] border border-[#5e5e5e]">
                <Stepper className="border-r border-[#5e5e5e]" />
                <span className="flex flex-1 items-center bg-[#424242] pl-[5px] text-[#eee]">18 pt</span>
              </div>
            </div>
          </div>
          <div className="mt-[25px] flex h-[66px] w-[414px] items-center rounded-[3px] border border-[#5e5e5e] text-[#6e6e6e]">
            <span className="w-[127px] pr-[6px] text-right tracking-[0.4px]">圓角半徑 (C):</span>
            <div className="flex h-[30px] w-[145px] rounded-[3px] bg-[#5a5a5a]">
              <Stepper className="!text-[#777]" />
              <span className="flex flex-1 items-center pl-[5px]">9 pt</span>
            </div>
          </div>
          <div className="mt-[36px] flex items-center">
            <span className="flex h-[18px] w-[18px] items-center justify-center rounded-[2px] bg-[#bbb] text-[#444]">
              <svg width="12" height="12" viewBox="0 0 12 12" fill="none" stroke="currentColor" strokeWidth="2.4"><path d="M1.5 6l3 3 6-7" /></svg>
            </span>
            <span className="ml-[8px] w-[105px]">預視 (P)</span>
            <span className="flex h-[37px] w-[137px] items-center justify-center rounded-full border-[3px] border-white text-[#e0e0e0]">確定</span>
            <span className="ml-[8px] flex h-[37px] w-[137px] items-center justify-center rounded-full border-2 border-[#ddd] text-[#e0e0e0]">取消</span>
          </div>
        </div>
      </div>
      <span className="absolute left-[788px] top-[989px] z-30 h-[85px] w-[272px] border-[2px] border-[#f00]" />

      {/* tool highlight */}
      <span className="absolute left-[16px] top-[184px] z-30 h-[40px] w-[42px] border-[3px] border-[#f00]" />

      {/* annotation */}
      <svg width="120" height="260" viewBox="0 0 120 260" className="pointer-events-none absolute left-[1250px] top-[550px] z-30 fill-[#f00] stroke-[#f00]">
        <path d="M20 235L57 13" strokeWidth="3" />
        <path d="M57 8l-7 18 10 1z" />
        <path d="M35 233L79 83" strokeWidth="3" />
        <path d="M80 78l-10 17 10 3z" />
      </svg>
      <div className="pointer-events-none absolute left-[1454px] top-[546px] z-30 whitespace-nowrap text-[24px] font-bold leading-[31px] text-[#f00] [paint-order:stroke] [-webkit-text-stroke:3px_#fff]">
        <div>先匯入單頁PDF</div>
        <div>1.因為打開會有一層透明路徑把眼睛點掉</div>
        <div>2.使用白色選取工具選取文字(不能在文字工具因為外觀</div>
        <div>的選項都會是灰色)</div>
        <div>3.加入兩層填色，第一個填色文字第二個填色為背景色</div>
        <div>4.外框選項在第二個填色按下fx 轉換為以下形狀/矩形</div>
        <div>5.在外框選項中調整額外寬度及高度完成</div>
        <div>(因為讀入PDF文字是會被打散，所以才會出現圖中效果</div>
        <div>如果是正常文字方塊建立不會有問題)</div>
      </div>
      <Badge n={1} x="left-[1633px]" y="top-[268px]" />
      <Badge n={2} x="left-[68px]" y="top-[179px]" />
      <Badge n={3} x="left-[1272px]" y="top-[791px]" />
      <Badge n={4} x="left-[1354px]" y="top-[791px]" />
      <Badge n={5} x="left-[773px]" y="top-[954px]" />
    </div>
  )
}
